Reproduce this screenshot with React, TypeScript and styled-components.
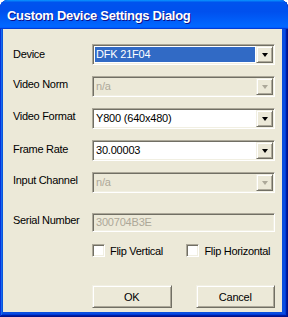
import React from "react";
import styled, { createGlobalStyle } from "styled-components";

const GlobalStyle = createGlobalStyle`
  html, body { margin: 0; padding: 0; background: #ffffff; }
  * { box-sizing: border-box; }
`;

const Window = styled.div`
  width: 288px;
  height: 317px;
  display: flex;
  flex-direction: column;
  background: #0a4ee0;
  border-radius: 8px 8px 0 0;
  box-shadow: inset -1px -1px #00138c, inset 1px 1px #0831d9,
    inset -2px -2px #001ea0, inset 2px 2px #166aee, inset -3px -3px #003bda,
    inset 3px 3px #0855dd;
  font-family: "Liberation Sans", Arial, sans-serif;
  font-size: 11px;
  color: #000;
`;

const TitleBar = styled.div`
  height: 29px;
  flex: none;
  display: flex;
  align-items: center;
  padding: 1px 0 0 7px;
  border-radius: 8px 8px 0 0;
  background: linear-gradient(
    180deg,
    #0997ff,
    #0053ee 8%,
    #0050ee 40%,
    #06f 88%,
    #06f 93%,
    #005bff 95%,
    #003dd7 96%,
    #003dd7
  );
`;

const Title = styled.span`
  font-family: "Liberation Sans", Arial, sans-serif;
  font-weight: bold;
  font-size: 13px;
  letter-spacing: -0.3px;
  color: #fff;
  text-shadow: 1px 1px #0f1089;
`;

const Client = styled.div`
  flex: 1;
  margin: 0 6px 5px 3px;
  background: #ece9d8;
  padding: 15px 7px 0 10px;
  display: flex;
  flex-direction: column;
`;

const Row = styled.div<{ $gap: number }>`
  display: grid;
  grid-template-columns: 79px 183px;
  align-items: start;
  margin-top: ${(p) => p.$gap}px;
`;

const Label = styled.div<{ $top: number }>`
  padding-top: ${(p) => p.$top}px;
  line-height: 13px;
  letter-spacing: -0.3px;
  white-space: nowrap;
`;

const Sunken = styled.div<{ $h: number; $disabled?: boolean }>`
  height: ${(p) => p.$h}px;
  border: 1px solid;
  border-color: #aca899 #ffffff #ffffff #aca899;
  box-shadow: inset 1px 1px #716f64, inset -1px -1px #f1efe2;
  background: ${(p) => (p.$disabled ? "#ece9d8" : "#ffffff")};
  padding: 1px;
  display: flex;
  align-items: stretch;
`;

const Value = styled.div<{ $selected?: boolean; $disabled?: boolean }>`
  flex: 1;
  margin: 1px;
  padding-left: 1px;
  display: flex;
  align-items: center;
  line-height: 13px;
  letter-spacing: -0.2px;
  background: ${(p) => (p.$selected ? "#316ac5" : "transparent")};
  color: ${(p) => (p.$selected ? "#fff" : p.$disabled ? "#aca899" : "#000")};
`;

const DropButton = styled.div`
  width: 17px;
  flex: none;
  border: 1px solid;
  border-color: #f1efe2 #716f64 #716f64 #f1efe2;
  box-shadow: inset 1px 1px #ffffff, inset -1px -1px #aca899;
  background: #ece9d8;
  display: flex;
  align-items: center;
  justify-content: center;
`;

const Arrow = styled.div<{ $disabled?: boolean }>`
  width: 0;
  height: 0;
  border-left: 3.5px solid transparent;
  border-right: 3.5px solid transparent;
  border-top: 4px solid ${(p) => (p.$disabled ? "#aca899" : "#000")};
  margin-top: 1px;
`;

const CheckRow = styled.div`
  display: flex;
  align-items: center;
  margin-top: 12px;
  padding-left: 79px;
  height: 13px;
`;

const CheckItem = styled.label<{ $w: number }>`
  display: flex;
  align-items: center;
  gap: 5px;
  width: ${(p) => p.$w}px;
  letter-spacing: -0.3px;
  white-space: nowrap;
`;

const Box = styled.span`
  width: 13px;
  height: 13px;
  flex: none;
  border: 1px solid;
  border-color: #aca899 #ffffff #ffffff #aca899;
  box-shadow: inset 1px 1px #716f64, inset -1px -1px #f1efe2;
  background: #ffffff;
`;

const ButtonRow = styled.div`
  display: flex;
  gap: 24px;
  margin-top: 28px;
  padding-left: 79px;
`;

const Button = styled.div`
  width: 80px;
  height: 23px;
  border: 1px solid;
  border-color: #f1efe2 #716f64 #716f64 #f1efe2;
  box-shadow: inset 1px 1px #ffffff, inset -1px -1px #aca899;
  background: #ece9d8;
  display: flex;
  align-items: center;
  justify-content: center;
  letter-spacing: -0.2px;
`;

type ComboProps = { value: string; selected?: boolean; disabled?: boolean };

const Combo = ({ value, selected, disabled }: ComboProps) => (
  <Sunken $h={21} $disabled={disabled}>
    <Value $selected={selected} $disabled={disabled}>
      {value}
    </Value>
    <DropButton>
      <Arrow $disabled={disabled} />
    </DropButton>
  </Sunken>
);

export default function App() {
  return (
    <>
      <GlobalStyle />
      <Window>
        <TitleBar>
          <Title>Custom Device Settings Dialog</Title>
        </TitleBar>
        <Client>
          <Row $gap={0}>
            <Label $top={4}>Device</Label>
            <Combo value="DFK 21F04" selected />
          </Row>
          <Row $gap={11}>
            <Label $top={2}>Video Norm</Label>
            <Combo value="n/a" disabled />
          </Row>
          <Row $gap={11}>
            <Label $top={2}>Video Format</Label>
            <Combo value="Y800 (640x480)" />
          </Row>
          <Row $gap={11}>
            <Label $top={3}>Frame Rate</Label>
            <Combo value="30.00003" />
          </Row>
          <Row $gap={11}>
            <Label $top={2}>Input Channel</Label>
            <Combo value="n/a" disabled />
          </Row>
          <Row $gap={20}>
            <Label $top={1}>Serial Number</Label>
            <Sunken $h={19} $disabled>
              <Value $disabled>300704B3E</Value>
            </Sunken>
          </Row>
          <CheckRow>
            <CheckItem $w={96}>
              <Box />
              Flip Vertical
            </CheckItem>
            <CheckItem $w={90}>
              <Box />
              Flip Horizontal
            </CheckItem>
          </CheckRow>
          <ButtonRow>
            <Button>OK</Button>
            <Button>Cancel</Button>
          </ButtonRow>
        </Client>
      </Window>
    </>
  );
}
